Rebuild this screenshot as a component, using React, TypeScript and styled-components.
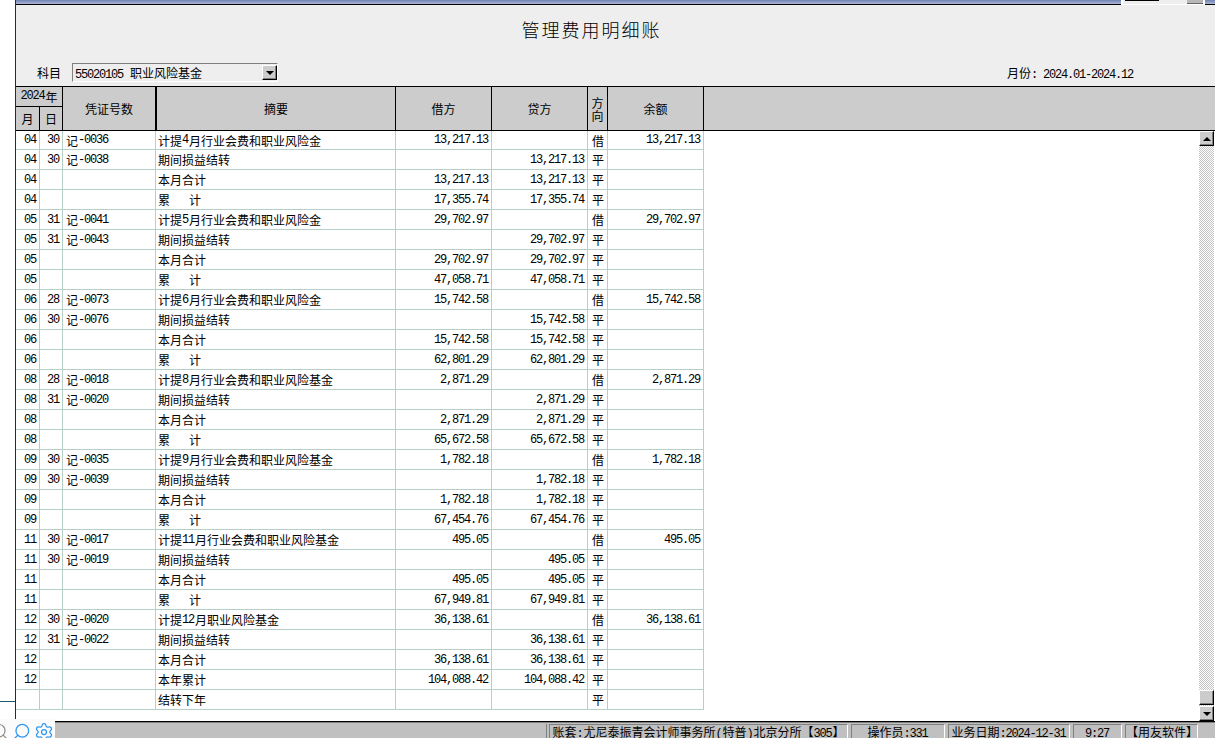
import React from 'react'
import styled, { createGlobalStyle } from 'styled-components'
import { Search, Settings } from 'lucide-react'

const GlobalStyle = createGlobalStyle`
    html, body{
        margin: 0;
        padding: 0;
        background: #fff;
    }
    body{
        font-family: "Noto Sans CJK SC", "Liberation Sans", sans-serif;
        font-size: 12px;
        color: #000;
    }
`

const Page = styled.div`
    width: 1215px;
    height: 738px;
    display: flex;
    flex-direction: column;
    overflow: hidden;
    position: relative;
`

const Upper = styled.div`
    flex: 1;
    min-height: 0;
    display: flex;
`

const LeftStrip = styled.div`
    width: 15px;
    background: #fff;
    border-right: 1px solid #0c3448;
`

const StripRule = styled.div`
    height: 701px;
    border-bottom: 1px solid #1d5a70;
`

const Main = styled.div`
    flex: 1;
    min-width: 0;
    display: flex;
    flex-direction: column;
    background: #eeeeee;
`

const TitleBar = styled.div`
    height: 4px;
    background: linear-gradient(#6f82b4, #aab6d4);
    border-bottom: 1px solid #000;
    position: relative;
`

const RemnantBox = styled.div`
    position: absolute;
    top: 0;
    right: 10px;
    width: 80px;
    height: 4px;
    background: #eee;
    border: solid #fff;
    border-width: 0 2px 1px 2px;
    display: flex;
    justify-content: space-between;
`

const RemnantText = styled.div`
    width: 34px;
    height: 1px;
    margin: 0 0 0 2px;
    background: #000;
`

const RemnantButton = styled.div`
    width: 16px;
    height: 3px;
    background: #b8b8b8;
    border-bottom: 1px solid #666;
`

const Heading = styled.div`
    height: 81px;
    display: flex;
    flex-direction: column;
`

const ReportTitle = styled.h1`
    margin: 0;
    padding: 11px 48px 0 0;
    height: 46px;
    box-sizing: border-box;
    text-align: center;
    font-size: 18px;
    font-weight: 300;
    letter-spacing: 2px;
    line-height: 26px;
`

const FilterRow = styled.div`
    display: flex;
    align-items: center;
    height: 19px;
    margin-top: 12px;
    padding: 0 81px 0 21px;
`

const FilterLabel = styled.span`
    width: 35px;
`

const Select = styled.div`
    box-sizing: border-box;
    width: 206px;
    height: 19px;
    display: flex;
    align-items: center;
    justify-content: space-between;
    padding: 0 0 0 2px;
    border: 1px solid;
    border-color: #808080 #fff #fff #808080;
`

const SelectButton = styled.div`
    box-sizing: border-box;
    width: 15px;
    height: 15px;
    display: flex;
    align-items: center;
    justify-content: center;
    background: #cccccc;
    border: 1px solid;
    border-color: #fff #000 #000 #fff;
    box-shadow: inset -1px -1px 0 #808080;
`

const DownArrow = styled.div`
    width: 0;
    height: 0;
    border-left: 4px solid transparent;
    border-right: 4px solid transparent;
    border-top: 4px solid #000;
`

const UpArrow = styled.div`
    width: 0;
    height: 0;
    border-left: 4px solid transparent;
    border-right: 4px solid transparent;
    border-bottom: 4px solid #000;
`

const Period = styled.span`
    margin-left: auto;
`

const Header = styled.div`
    box-sizing: border-box;
    height: 45px;
    display: grid;
    grid-template-columns: 24px 23px 93px 240px 96px 96px 20px 96px 1fr;
    grid-template-rows: 20px 23px;
    background: #cccccc;
    border-top: 1px solid #000;
    border-bottom: 1px solid #000;
`

const HeadCell = styled.div<{ $col: string, $row?: string, $thick?: boolean, $open?: boolean, $bottom?: boolean }>`
    box-sizing: border-box;
    display: flex;
    align-items: center;
    justify-content: center;
    text-align: center;
    line-height: 13px;
    grid-column: ${p => p.$col};
    grid-row: ${p => p.$row || '1 / 3'};
    border-right: ${p => (p.$open ? 'none' : '1px solid #000')};
    border-left: ${p => (p.$thick ? '1px solid #000' : 'none')};
    border-bottom: ${p => (p.$bottom ? '1px solid #000' : 'none')};
`

const Body = styled.div`
    flex: 1;
    min-height: 0;
    display: flex;
    background: #fff;
`

const Rows = styled.div`
    flex: 1;
    min-width: 0;
`

const Row = styled.div`
    height: 20px;
    display: grid;
    grid-template-columns: 24px 23px 93px 240px 96px 96px 20px 96px;
    width: 688px;

    &:first-child{
        height: 19px;
    }
`

const Cell = styled.div<{ $align?: string }>`
    box-sizing: border-box;
    padding: 0 2px 0 3px;
    display: flex;
    align-items: center;
    justify-content: ${p => p.$align || 'flex-start'};
    white-space: pre;
    border-right: 1px solid #b7cfc9;
    border-bottom: 1px solid #b7cfc9;
`

const Summary = styled(Cell)`
    padding-left: 2px;
`

const Ascii = styled.span`
    font-family: "Liberation Mono", monospace;
    font-size: 12px;
    letter-spacing: -1.2px;
    margin-right: 1px;
`

const ScrollBar = styled.div`
    width: 15px;
    margin-right: 1px;
    display: flex;
    flex-direction: column;
`

const ScrollButton = styled.div`
    box-sizing: border-box;
    height: 15px;
    flex: none;
    display: flex;
    align-items: center;
    justify-content: center;
    background: #cccccc;
    border: 1px solid;
    border-color: #fff #000 #000 #fff;
    box-shadow: inset -1px -1px 0 #808080;
`

const Track = styled.div`
    flex: 1;
    display: flex;
    flex-direction: column;
    justify-content: flex-end;
    background: repeating-conic-gradient(#c4c4c4 0 25%, #fff 0 50%) 0 0 / 2px 2px;
`

const Thumb = styled(ScrollButton)`
    margin-bottom: 1px;
`

const StatusBar = styled.div`
    box-sizing: border-box;
    height: 17px;
    flex: none;
    display: flex;
    justify-content: flex-end;
    gap: 3px;
    padding: 2px 17px 0 0;
    background: #c0c0c0;
    border-top: 1px solid #000;
    box-shadow: inset 0 1px 0 #808080;
`

const StatusCell = styled.div<{ $w: number }>`
    box-sizing: border-box;
    width: ${p => p.$w}px;
    height: 14px;
    text-align: center;
    line-height: 13px;
    white-space: nowrap;
    border: 1px solid;
    border-color: #808080 #fff transparent #808080;
    border-bottom: none;
`

const StatusDivider = styled.div`
    width: 1px;
    height: 14px;
    background: #808080;
    margin-right: -1px;
`

const Tray = styled.div`
    position: absolute;
    left: 0;
    bottom: 0;
    width: 55px;
    height: 19px;
    padding-top: 3px;
    box-sizing: border-box;
    background: #fbfbfb;
    overflow: hidden;
    display: flex;
    gap: 3px;
`

const GrayLens = styled(Search)`
    flex: none;
    margin-left: -10px;
    color: #8a8a8a;
`

const BlueLens = styled(Search)`
    flex: none;
    color: #2f97ee;
    transform: scaleX(-1);
`

const Gear = styled(Settings)`
    flex: none;
    color: #2f97ee;
`

// latin in the old bitmap font is half the cjk width, so it gets its own size
const Txt = ({ children }: { children: string }) => (
    <>
        {children.split(/([\x20-\x7e]+)/).map((part, i) =>
            /^[\x20-\x7e]+$/.test(part) ? <Ascii key={i}>{part}</Ascii> : part
        )}
    </>
)

type Line = [string, string, string, string, string, string, string, string]

const rows: Array<Line> = [
    ['04', '30', '记-0036', '计提4月行业会费和职业风险金', '13,217.13', '', '借', '13,217.13'],
    ['04', '30', '记-0038', '期间损益结转', '', '13,217.13', '平', ''],
    ['04', '', '', '本月合计', '13,217.13', '13,217.13', '平', ''],
    ['04', '', '', '累   计', '17,355.74', '17,355.74', '平', ''],
    ['05', '31', '记-0041', '计提5月行业会费和职业风险金', '29,702.97', '', '借', '29,702.97'],
    ['05', '31', '记-0043', '期间损益结转', '', '29,702.97', '平', ''],
    ['05', '', '', '本月合计', '29,702.97', '29,702.97', '平', ''],
    ['05', '', '', '累   计', '47,058.71', '47,058.71', '平', ''],
    ['06', '28', '记-0073', '计提6月行业会费和职业风险金', '15,742.58', '', '借', '15,742.58'],
    ['06', '30', '记-0076', '期间损益结转', '', '15,742.58', '平', ''],
    ['06', '', '', '本月合计', '15,742.58', '15,742.58', '平', ''],
    ['06', '', '', '累   计', '62,801.29', '62,801.29', '平', ''],
    ['08', '28', '记-0018', '计提8月行业会费和职业风险基金', '2,871.29', '', '借', '2,871.29'],
    ['08', '31', '记-0020', '期间损益结转', '', '2,871.29', '平', ''],
    ['08', '', '', '本月合计', '2,871.29', '2,871.29', '平', ''],
    ['08', '', '', '累   计', '65,672.58', '65,672.58', '平', ''],
    ['09', '30', '记-0035', '计提9月行业会费和职业风险基金', '1,782.18', '', '借', '1,782.18'],
    ['09', '30', '记-0039', '期间损益结转', '', '1,782.18', '平', ''],
    ['09', '', '', '本月合计', '1,782.18', '1,782.18', '平', ''],
    ['09', '', '', '累   计', '67,454.76', '67,454.76', '平', ''],
    ['11', '30', '记-0017', '计提11月行业会费和职业风险基金', '495.05', '', '借', '495.05'],
    ['11', '30', '记-0019', '期间损益结转', '', '495.05', '平', ''],
    ['11', '', '', '本月合计', '495.05', '495.05', '平', ''],
    ['11', '', '', '累   计', '67,949.81', '67,949.81', '平', ''],
    ['12', '30', '记-0020', '计提12月职业风险基金', '36,138.61', '', '借', '36,138.61'],
    ['12', '31', '记-0022', '期间损益结转', '', '36,138.61', '平', ''],
    ['12', '', '', '本月合计', '36,138.61', '36,138.61', '平', ''],
    ['12', '', '', '本年累计', '104,088.42', '104,088.42', '平', ''],
    ['', '', '', '结转下年', '', '', '平', ''],
]

const App = () => (
    <Page>
        <GlobalStyle />
        <Upper>
            <LeftStrip>
                <StripRule />
            </LeftStrip>
            <Main>
                <TitleBar>
                    <RemnantBox>
                        <RemnantText />
                        <RemnantButton />
                    </RemnantBox>
                </TitleBar>
                <Heading>
                    <ReportTitle>管理费用明细账</ReportTitle>
                    <FilterRow>
                        <FilterLabel>科目</FilterLabel>
                        <Select>
                            <span><Txt>55020105 职业风险基金</Txt></span>
                            <SelectButton><DownArrow /></SelectButton>
                        </Select>
                        <Period><Txt>月份: 2024.01-2024.12</Txt></Period>
                    </FilterRow>
                </Heading>
                <Header>
                    <HeadCell $col="1 / 3" $row="1" $bottom><Txt>2024年</Txt></HeadCell>
                    <HeadCell $col="1" $row="2">月</HeadCell>
                    <HeadCell $col="2" $row="2">日</HeadCell>
                    <HeadCell $col="3">凭证号数</HeadCell>
                    <HeadCell $col="4" $thick>摘要</HeadCell>
                    <HeadCell $col="5">借方</HeadCell>
                    <HeadCell $col="6">贷方</HeadCell>
                    <HeadCell $col="7">方<br />向</HeadCell>
                    <HeadCell $col="8">余额</HeadCell>
                    <HeadCell $col="9" $open />
                </Header>
                <Body>
                    <Rows>
                        {rows.map((r, index) => (
                            <Row key={index}>
                                <Cell $align="flex-end"><Txt>{r[0]}</Txt></Cell>
                                <Cell $align="flex-end"><Txt>{r[1]}</Txt></Cell>
                                <Cell><Txt>{r[2]}</Txt></Cell>
                                <Summary><Txt>{r[3]}</Txt></Summary>
                                <Cell $align="flex-end"><Txt>{r[4]}</Txt></Cell>
                                <Cell $align="flex-end"><Txt>{r[5]}</Txt></Cell>
                                <Cell $align="center">{r[6]}</Cell>
                                <Cell $align="flex-end"><Txt>{r[7]}</Txt></Cell>
                            </Row>
                        ))}
                    </Rows>
                    <ScrollBar>
                        <ScrollButton><UpArrow /></ScrollButton>
                        <Track>
                            <Thumb />
                        </Track>
                        <ScrollButton><DownArrow /></ScrollButton>
                    </ScrollBar>
                </Body>
            </Main>
        </Upper>
        <StatusBar>
            <StatusDivider />
            <StatusCell $w={299}><Txt>账套:尤尼泰振青会计师事务所(特普)北京分所【305】</Txt></StatusCell>
            <StatusCell $w={94}><Txt>操作员:331</Txt></StatusCell>
            <StatusCell $w={122}><Txt>业务日期:2024-12-31</Txt></StatusCell>
            <StatusCell $w={49}><Txt>9:27</Txt></StatusCell>
            <StatusCell $w={73}>【用友软件】</StatusCell>
        </StatusBar>
        <Tray>
            <GrayLens size={19} strokeWidth={1.5} />
            <BlueLens size={19} strokeWidth={1.6} />
            <Gear size={20} strokeWidth={1.5} />
        </Tray>
    </Page>
)

export default App
